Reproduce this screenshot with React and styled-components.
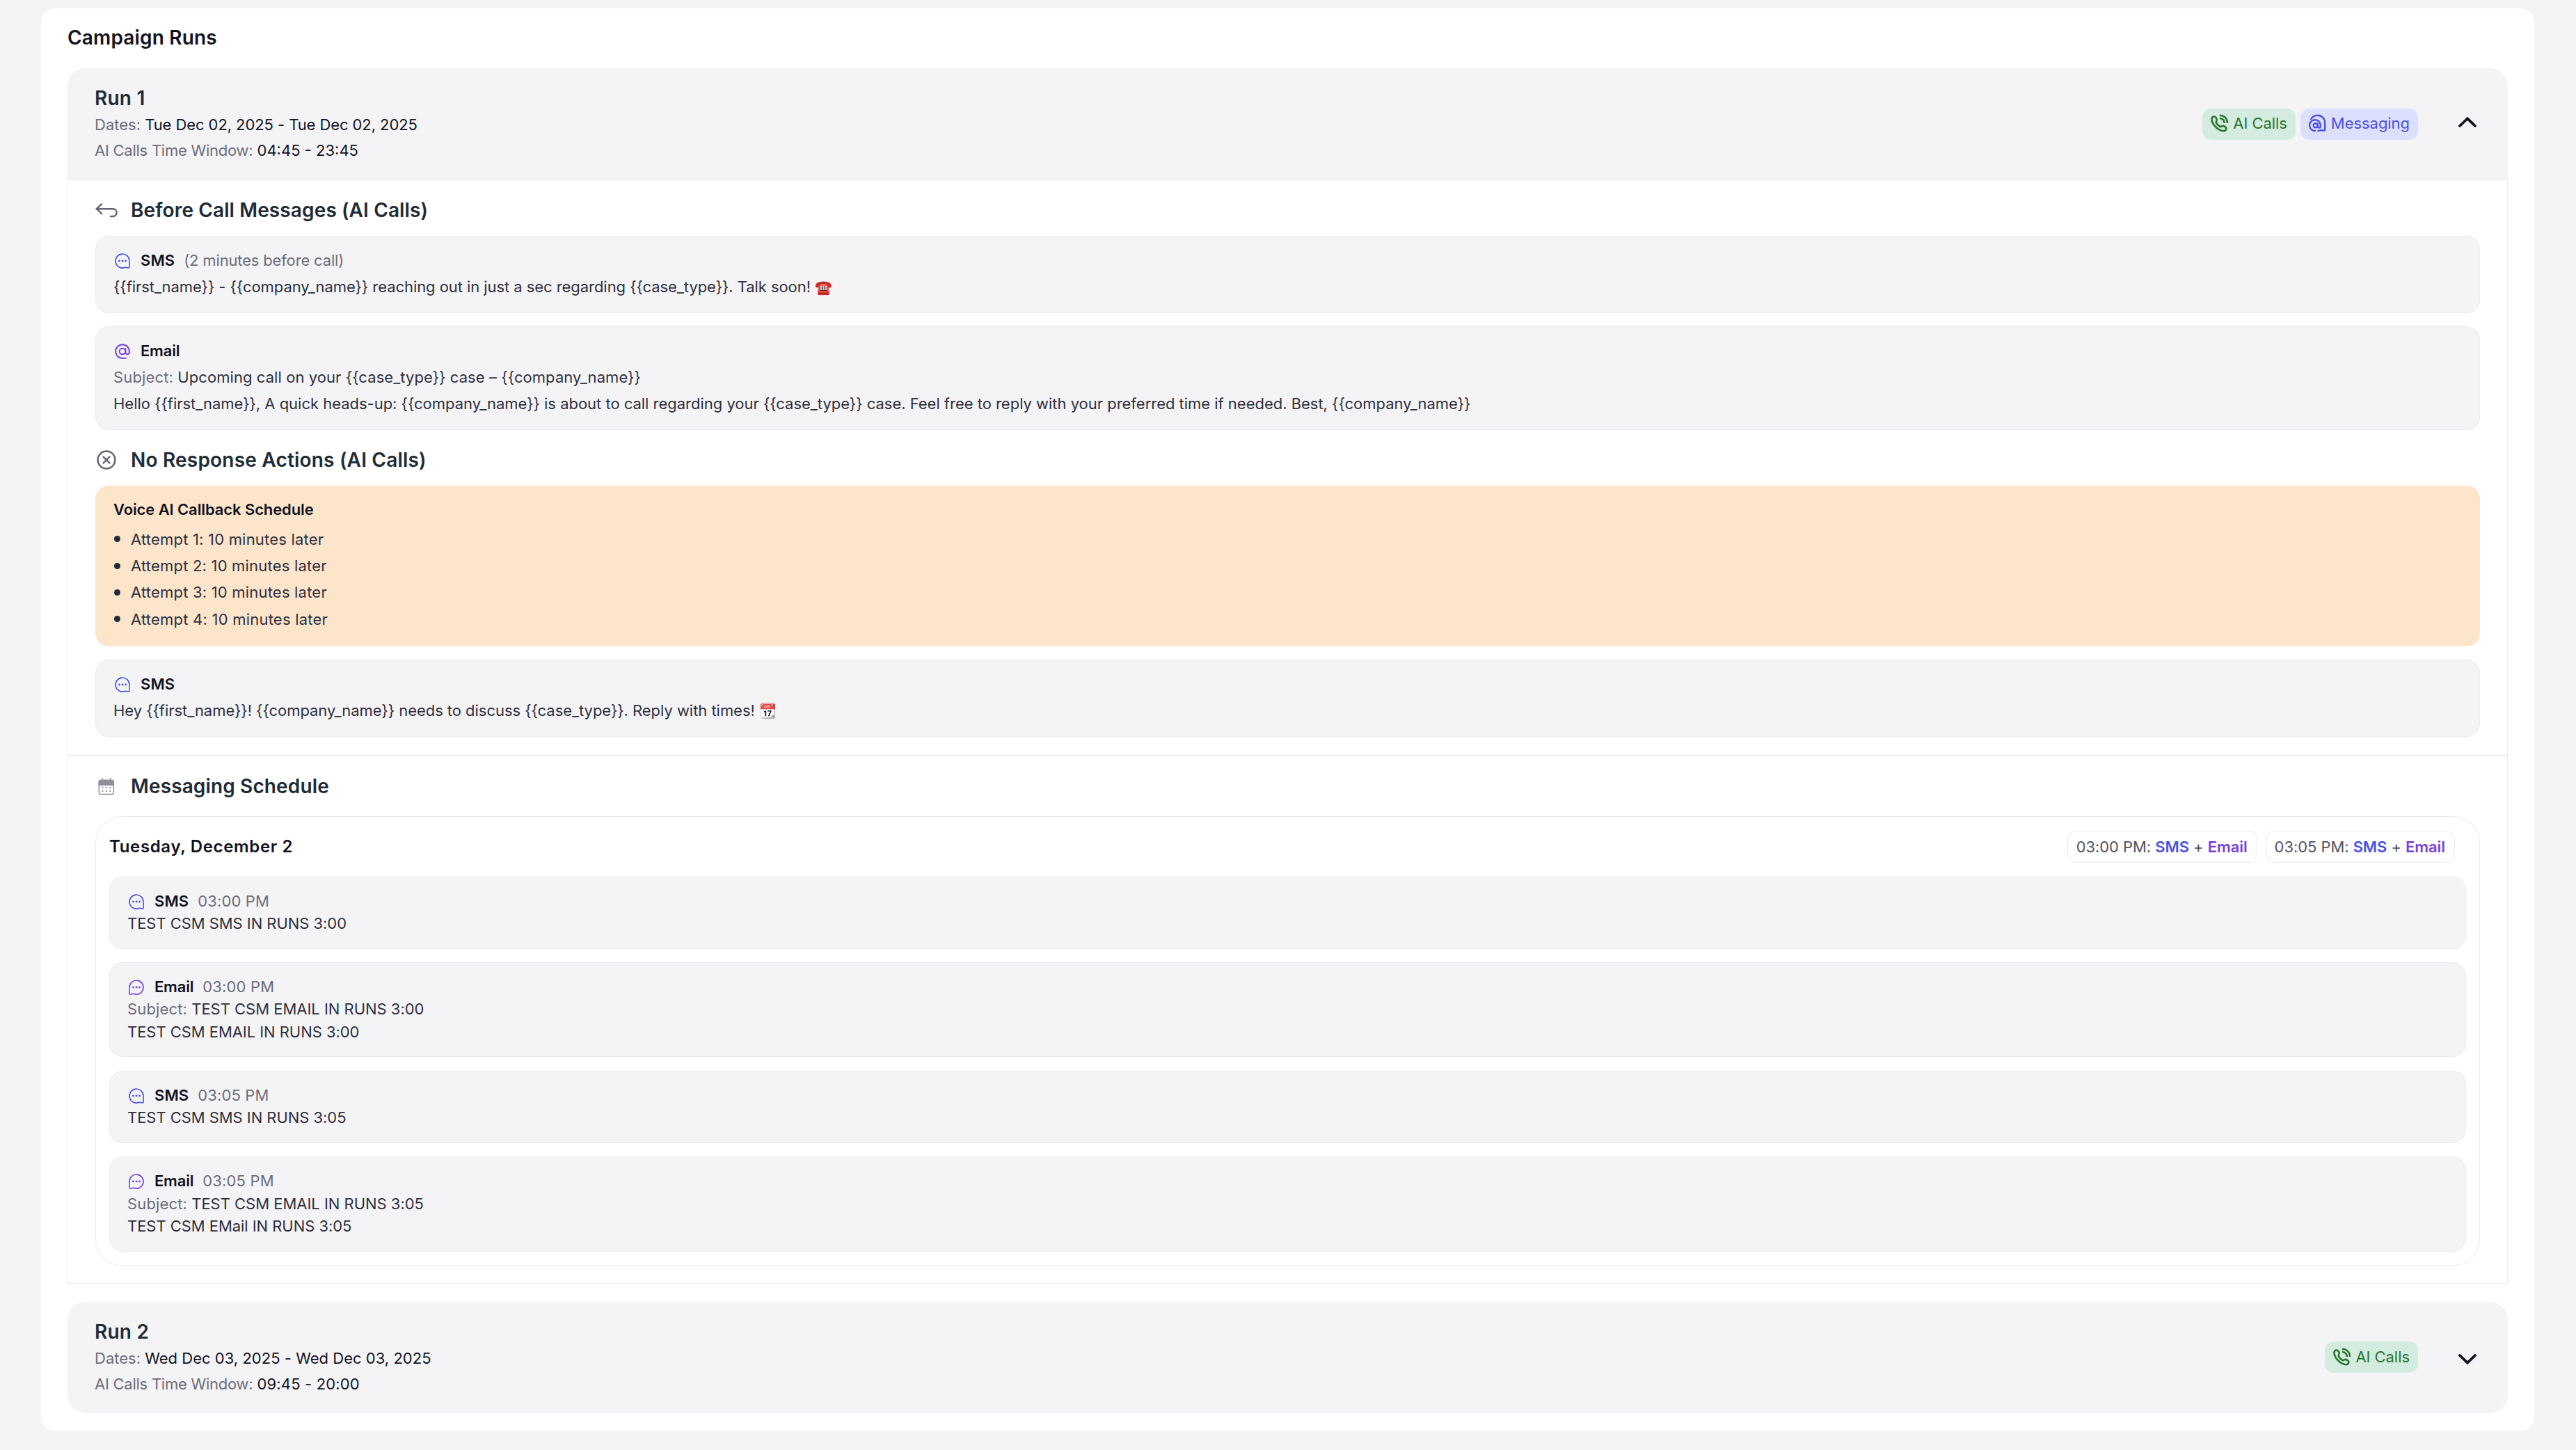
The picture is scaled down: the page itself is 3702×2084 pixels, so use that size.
import styled, { createGlobalStyle } from 'styled-components'

const attempts = [
  { label: 'Attempt 1: 10 minutes later', track: 0.2 },
  { label: 'Attempt 2: 10 minutes later', track: 0.2 },
  { label: 'Attempt 3: 10 minutes later', track: 0.2 },
  { label: 'Attempt 4: 10 minutes later', track: 0.22 },
]

const slots = ['03:00 PM', '03:05 PM']

const schedule = [
  { type: 'SMS', time: '03:00 PM', body: 'TEST CSM SMS IN RUNS 3:00' },
  { type: 'Email', time: '03:00 PM', subject: 'TEST CSM EMAIL IN RUNS 3:00', body: 'TEST CSM EMAIL IN RUNS 3:00' },
  { type: 'SMS', time: '03:05 PM', body: 'TEST CSM SMS IN RUNS 3:05' },
  { type: 'Email', time: '03:05 PM', subject: 'TEST CSM EMAIL IN RUNS 3:05', body: 'TEST CSM EMail IN RUNS 3:05' },
]

function PhoneIcon() {
  return (
    <svg width="26" height="26" viewBox="0 0 26 26" fill="none" stroke="currentColor" strokeWidth="2.6" strokeLinecap="butt" strokeLinejoin="round">
      <path d="M1.5 7.2C1.6 5 3.2 3.5 4.9 3.5C6.4 3.5 7.4 4.6 8.3 6.2C9.2 7.8 9.2 8.6 8.2 9.9C7.4 11 7.6 11.9 8.8 13.8C10.2 15.8 11.7 17.2 13.4 18C14.6 18.5 15.2 18 16.2 17.3C17.4 16.5 18.4 16.7 20 17.7C21.8 18.8 22.7 19.9 22.3 21.4C21.8 23.2 20.2 24.3 18.2 24.2C14.2 24 9.4 21.2 6 17.2C3 13.6 1.4 10 1.5 7.2Z" />
      <path d="M12.8 1.7C19.5 1.9 23.8 6.2 24 13" />
      <path d="M12.9 6C17 6.2 19.6 8.8 19.8 13" />
    </svg>
  )
}

function MessagingIcon() {
  return (
    <svg width="26" height="26" viewBox="0 0 26 26" fill="none" stroke="currentColor" strokeWidth="2.4" strokeLinecap="round" strokeLinejoin="round">
      <path d="M3.2 7.2C5 3.8 8.5 1.8 12.6 1.8C18.6 1.8 23.2 6.4 23.2 12.2V21.8Q23.2 24 21.2 23.6L18.6 23.1Q17.2 22.9 15.6 23.6L13.4 24" />
      <path d="M9.2 24A7.9 7.9 0 1 1 16.8 16.4V17.6A2 2 0 0 1 12.8 17.6V13.6" />
      <circle cx="9.7" cy="16.3" r="3" />
    </svg>
  )
}

// the tail sits bottom right, or bottom left when flipped
function BubbleIcon({ flip }) {
  return (
    <svg width="26" height="26" viewBox="-2 -2 26 26" fill="none" stroke="currentColor" strokeWidth="1.6" strokeLinejoin="round">
      <g transform={flip ? 'translate(22 0) scale(-1 1)' : undefined}>
        <path d="M21 11V19.6Q21.1 21.4 19.2 21L17.3 20.6Q15.8 20.1 14 20.6A10 10 0 1 1 21 11Z" />
        <g fill="currentColor" stroke="none">
          <circle cx="6.5" cy="11" r="1.4" />
          <circle cx="11" cy="11" r="1.4" />
          <circle cx="15.5" cy="11" r="1.4" />
        </g>
      </g>
    </svg>
  )
}

function AtIcon() {
  return (
    <svg width="26" height="26" viewBox="-2 -2 26 26" fill="none" stroke="currentColor" strokeWidth="2" strokeLinecap="round">
      <path d="M15.8 20.8H11A9.8 9.8 0 1 1 20.8 11V12.4A2.7 2.7 0 0 1 15.4 12.4V7.4" />
      <circle cx="11" cy="11" r="4.3" />
    </svg>
  )
}

function BackIcon() {
  return (
    <svg width="32" height="22" viewBox="0 0 32 22" fill="none" stroke="currentColor" strokeWidth="2.5" strokeLinecap="round" strokeLinejoin="round">
      <path d="M9 2.3L1.8 9.2L9 16.2" />
      <path d="M1.8 9.2H25.4A5.2 5.4 0 0 1 25.4 20H22" />
    </svg>
  )
}

function CancelIcon() {
  return (
    <svg width="32" height="32" viewBox="0 0 32 32" fill="none" stroke="currentColor" strokeWidth="2.5" strokeLinecap="round">
      <circle cx="16" cy="16" r="12.4" />
      <path d="M11.6 11.6L20.4 20.4M20.4 11.6L11.6 20.4" />
    </svg>
  )
}

function CalendarIcon() {
  return (
    <svg width="32" height="32" viewBox="0 0 32 32" fill="none" stroke="#8f8f9b" strokeWidth="1.5">
      <rect x="5.3" y="7.4" width="21" height="20" rx="2.2" />
      <path d="M10 4V8M21.6 4V8" />
      <path d="M5.3 9.4Q5.3 7.4 7.3 7.4H24.3Q26.3 7.4 26.3 9.4V14.2H5.3Z" fill="#8f8f9b" />
      <path d="M9.6 18H11.4M15 18H16.8M20.4 18H22.2M9.6 23H11.4M15 23H16.8M20.4 23H22.2" strokeWidth="1.8" />
    </svg>
  )
}

function Chevron({ open }) {
  return (
    <svg width="36" height="36" viewBox="0 0 36 36" fill="none" stroke="#12121f" strokeWidth="3.8" strokeLinecap="round">
      <path d={open ? 'M7 21L18 10.4L29 21' : 'M7 15L18 25.6L29 15'} />
    </svg>
  )
}

function RunHeading({ title, dates, datesTrack, hours, hoursTrack, messaging, open }) {
  return (
    <RunHeader $open={open}>
      <div>
        <RunTitle>{title}</RunTitle>
        <RunMeta>
          <Muted $track={0}>Dates:</Muted> <Text $track={datesTrack}>{dates}</Text>
        </RunMeta>
        <RunMeta>
          <Muted $track={-0.25}>AI Calls Time Window:</Muted> <Text $track={hoursTrack}>{hours}</Text>
        </RunMeta>
      </div>
      <RunSide>
        <Tags>
          <Tag $color="#2a752e" $bg="#d4ebdf"><PhoneIcon />AI Calls</Tag>
          {messaging && <Tag $color="#4a50e2" $bg="#dcdfff"><MessagingIcon />Messaging</Tag>}
        </Tags>
        <Chevron open={open} />
      </RunSide>
    </RunHeader>
  )
}

export default function App() {
  return (
    <>
      <GlobalStyle />
      <Card>
        <PageTitle>Campaign Runs</PageTitle>
        <RunHeading
          open
          messaging
          title="Run 1"
          dates="Tue Dec 02, 2025 - Tue Dec 02, 2025"
          datesTrack={-0.08}
          hours="04:45 - 23:45"
          hoursTrack={0}
        />
        <RunBody>
          <Section $bottom={26}>
            <SectionTitle $track={0.12}><BackIcon />Before Call Messages (AI Calls)</SectionTitle>
            <Stack>
              <Message>
                <MessageHead>
                  <Kind $type="SMS"><BubbleIcon /></Kind>
                  <Strong $track={0.1}>SMS</Strong>
                  <Muted $track={-0.16}>(2 minutes before call)</Muted>
                </MessageHead>
                <Body $track={-0.06}>
                  {'{{first_name}} - {{company_name}} reaching out in just a sec regarding {{case_type}}. Talk soon! '}
                  <Emoji>☎️</Emoji>
                </Body>
              </Message>
              <Message>
                <MessageHead>
                  <Kind $type="Email"><AtIcon /></Kind>
                  <Strong $track={-0.2}>Email</Strong>
                </MessageHead>
                <Body $track={0.07}>
                  <Muted $track={0.15}>Subject:</Muted> {'Upcoming call on your {{case_type}} case – {{company_name}}'}
                </Body>
                <Body $track={-0.02}>
                  {'Hello {{first_name}}, A quick heads-up: {{company_name}} is about to call regarding your {{case_type}} case. Feel free to reply with your preferred time if needed. Best, {{company_name}}'}
                </Body>
              </Message>
            </Stack>
            <SectionTitle $track={0.2} $top={23}><CancelIcon />No Response Actions (AI Calls)</SectionTitle>
            <Stack>
              <Callback>
                <Strong $track={-0.1}>Voice AI Callback Schedule</Strong>
                <Attempts>
                  {attempts.map((attempt, i) => <Attempt key={i} $track={attempt.track}>{attempt.label}</Attempt>)}
                </Attempts>
              </Callback>
              <Message>
                <MessageHead>
                  <Kind $type="SMS"><BubbleIcon /></Kind>
                  <Strong $track={0.1}>SMS</Strong>
                </MessageHead>
                <Body $track={-0.04}>
                  {'Hey {{first_name}}! {{company_name}} needs to discuss {{case_type}}. Reply with times! '}
                  <Emoji>📆</Emoji>
                </Body>
              </Message>
            </Stack>
          </Section>
          <Divider />
          <Section $bottom={25}>
            <SectionTitle $track={0.13}><CalendarIcon />Messaging Schedule</SectionTitle>
            <Day>
              <DayHead>
                <DayTitle>Tuesday, December 2</DayTitle>
                <Slots>
                  {slots.map(slot =>
                    <Slot key={slot}>
                      {slot}: <Channel $type="SMS">SMS</Channel> + <Channel $type="Email">Email</Channel>
                    </Slot>
                  )}
                </Slots>
              </DayHead>
              <Stack>
                {schedule.map((item, i) =>
                  <Message key={i} $compact>
                    <MessageHead>
                      <Kind $type={item.type}><BubbleIcon flip={item.type === 'Email'} /></Kind>
                      <Strong $track={item.type === 'SMS' ? 0.1 : -0.2}>{item.type}</Strong>
                      <Muted $track={0.15}>{item.time}</Muted>
                    </MessageHead>
                    {item.subject && <Body $track={-0.02}><Muted $track={0.15}>Subject:</Muted> {item.subject}</Body>}
                    <Body $track={-0.05}>{item.body}</Body>
                  </Message>
                )}
              </Stack>
            </Day>
          </Section>
        </RunBody>
        <RunHeading
          title="Run 2"
          dates="Wed Dec 03, 2025 - Wed Dec 03, 2025"
          datesTrack={0.02}
          hours="09:45 - 20:00"
          hoursTrack={0.15}
        />
      </Card>
    </>
  )
}

const kindColors = { SMS: '#4a52e4', Email: '#783fe2' }

const GlobalStyle = createGlobalStyle`
  * {
    box-sizing: border-box;
  }
  body {
    margin: 0;
    padding: 12px 60px 28px 59px;
    background: #f4f4f7;
    color: #12121f;
    font-family: "Inter", sans-serif;
    font-size: 22px;
  }
  svg {
    flex: none;
    display: block;
  }
`
const Card = styled.main`
  height: 2044px;
  padding: 22px 38px 26px;
  border-radius: 20px;
  background: #fff;
`
const PageTitle = styled.h1`
  margin: 0 0 24px;
  font-size: 28px;
  font-weight: 600;
  line-height: 40px;
  letter-spacing: 0.16px;
`
const RunHeader = styled.div`
  display: flex;
  align-items: center;
  justify-content: space-between;
  height: 160px;
  padding: 0 40px 0 39px;
  border-radius: ${({ $open }) => ($open ? '26px 26px 0 0' : '26px')};
  background: #f4f4f7;
`
const RunTitle = styled.h2`
  margin: 0;
  color: #212b36;
  font-size: 28px;
  font-weight: 600;
  line-height: 40px;
  letter-spacing: 0.2px;
`
const RunMeta = styled.div`
  line-height: 37px;
`
const Text = styled.span`
  letter-spacing: ${({ $track }) => $track}px;
`
const Muted = styled(Text)`
  color: #6c6c79;
`
const Strong = styled(Text)`
  color: #12121f;
  font-weight: 600;
`
const RunSide = styled.div`
  display: flex;
  align-items: center;
  gap: 53px;
`
const Tags = styled.div`
  display: flex;
  gap: 7px;
`
const Tag = styled.span`
  display: flex;
  align-items: center;
  gap: 6px;
  height: 45px;
  padding: 0 12px 2px;
  border-radius: 13px;
  background: ${({ $bg }) => $bg};
  color: ${({ $color }) => $color};
  letter-spacing: -0.05px;
`
const RunBody = styled.div`
  margin-bottom: 26px;
  border: 1px solid #ebebee;
`
const Section = styled.section`
  padding: 23px 39px ${({ $bottom }) => $bottom}px;
`
const SectionTitle = styled.h3`
  display: flex;
  align-items: center;
  gap: 19px;
  height: 40px;
  margin: ${({ $top }) => $top || 0}px 0 17px;
  color: #212b36;
  font-size: 28px;
  font-weight: 600;
  letter-spacing: ${({ $track }) => $track}px;

  svg {
    color: #666672;
  }
`
const Stack = styled.div`
  display: flex;
  flex-direction: column;
  gap: 19.3px;
`
const Message = styled.article`
  padding: ${({ $compact }) => ($compact ? '18px 25px 19px' : '15px 25px 17px')};
  border: 1px solid #ebebee;
  border-radius: 19px;
  background: #f4f4f7;
  color: #2f2f3c;
  line-height: ${({ $compact }) => ($compact ? '32.5px' : '38.3px')};
`
const MessageHead = styled.div`
  display: flex;
  align-items: center;
  gap: 13px;
`
const Kind = styled.span`
  margin-top: 2px;
  color: ${({ $type }) => kindColors[$type]};
`
const Body = styled.p`
  margin: 0;
  letter-spacing: ${({ $track }) => $track}px;
`
const Emoji = styled.span`
  font-size: 20px;
  line-height: 1;
`
const Callback = styled.div`
  height: 231px;
  padding: 15px 26px;
  border-radius: 19px;
  background: #fce5cb;
  line-height: 38px;
`
const Attempts = styled.ul`
  margin: 5px 0 0;
  padding: 0;
  list-style: none;
`
const Attempt = styled.li`
  display: flex;
  align-items: center;
  gap: 15px;
  color: #2f2f3c;
  line-height: 38.3px;
  letter-spacing: ${({ $track }) => $track}px;

  &::before {
    content: '';
    width: 9px;
    height: 9px;
    margin-left: 1px;
    border-radius: 50%;
    background: #212b36;
  }
`
const Divider = styled.hr`
  height: 2px;
  margin: 0;
  border: 0;
  background: #ebebf0;
`
const Day = styled.div`
  margin-top: 23px;
  padding: 20px 19px 19px;
  border: 1px solid #ebebee;
  border-radius: 38px;
`
const DayHead = styled.div`
  display: flex;
  align-items: center;
  justify-content: space-between;
  margin-bottom: 20px;
  padding-right: 16px;
`
const DayTitle = styled.h4`
  margin: 0;
  font-size: 24px;
  font-weight: 600;
  letter-spacing: 0.65px;
`
const Slots = styled.div`
  display: flex;
  gap: 12px;
`
const Slot = styled.span`
  height: 46px;
  padding: 0 13px 0 12px;
  border: 1px solid #ebebee;
  border-radius: 13px;
  color: #52525f;
  line-height: 44px;
  letter-spacing: -0.07px;
`
const Channel = styled.span`
  color: ${({ $type }) => kindColors[$type]};
  font-weight: 600;
`
